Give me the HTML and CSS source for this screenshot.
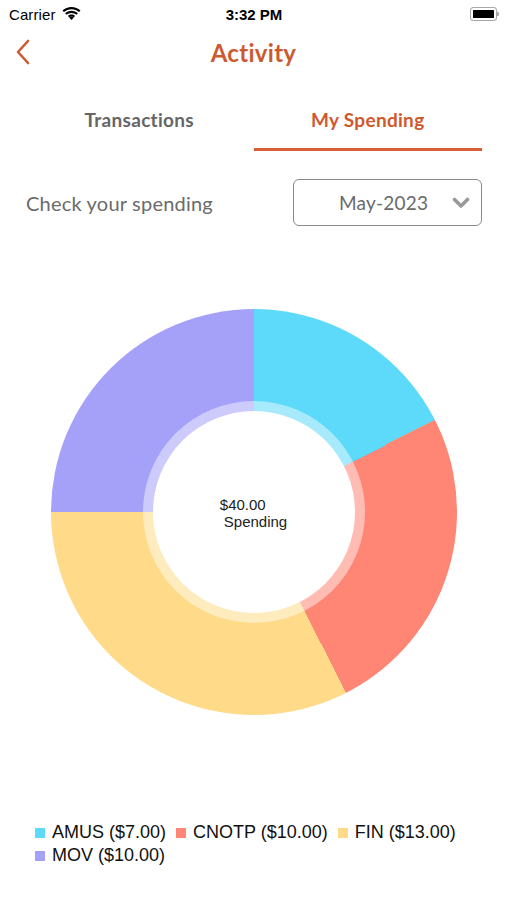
FILE: index.html
```html
<!DOCTYPE html>
<html>
<head>
<meta charset="utf-8">
<link rel="stylesheet" href="styles.css">
</head>
<body>
<div class="screen">
  <div class="status">
    <div class="status-left">
      <span class="carrier">Carrier</span>
      <svg class="wifi" width="19" height="13" viewBox="0 0 19 13">
        <path d="M9.5 2.2c2.9 0 5.5 1.1 7.5 2.9l1.5-1.6C16.1 1.3 12.9 0 9.5 0S2.9 1.3.5 3.5L2 5.1c2-1.8 4.6-2.9 7.5-2.9z" fill="#000"/>
        <path d="M9.5 5.9c1.9 0 3.6.7 4.9 1.9l1.5-1.6C14.2 4.6 12 3.7 9.5 3.7S4.8 4.6 3.1 6.2l1.5 1.6c1.3-1.2 3-1.9 4.9-1.9z" fill="#000"/>
        <path d="M9.5 9.5c.9 0 1.7.3 2.3.9L9.5 12.9 7.2 10.4c.6-.6 1.4-.9 2.3-.9z" fill="#000"/>
        <path d="M9.5 7.6c1.4 0 2.6.5 3.5 1.4l-1.2 1.3c-.6-.6-1.4-.9-2.3-.9s-1.7.3-2.3.9L6 9c.9-.9 2.1-1.4 3.5-1.4z" fill="#000"/>
      </svg>
    </div>
    <span class="time">3:32 PM</span>
    <div class="battery"><div class="battery-fill"></div><div class="battery-nub"></div></div>
  </div>

  <div class="nav">
    <svg class="back" width="16" height="26" viewBox="0 0 16 26">
      <path d="M13 2 L3 13 L13 24" fill="none" stroke="#CD5A2F" stroke-width="2.6" stroke-linecap="round" stroke-linejoin="round"/>
    </svg>
    <span class="title">Activity</span>
  </div>

  <div class="tabs">
    <div class="tab">Transactions</div>
    <div class="tab active">My Spending</div>
  </div>

  <div class="filter">
    <span class="filter-label">Check your spending</span>
    <div class="select">
      <span class="select-value">May-2023</span>
      <svg class="chev" width="18" height="12" viewBox="0 0 18 12">
        <path d="M2.5 2.5 L9 9 L15.5 2.5" fill="none" stroke="#9a9a9a" stroke-width="3.6" stroke-linecap="round" stroke-linejoin="round"/>
      </svg>
    </div>
  </div>

  <div class="chart-wrap">
    <div class="donut">
      <div class="donut-ring">
        <div class="donut-hole">
          <div class="center-text">
            <div>$40.00</div>
            <div class="indent">Spending</div>
          </div>
        </div>
      </div>
    </div>
  </div>

  <div class="legend">
    <div class="item"><span class="sw amus"></span>AMUS ($7.00)</div>
    <div class="item"><span class="sw cnotp"></span>CNOTP ($10.00)</div>
    <div class="item"><span class="sw fin"></span>FIN ($13.00)</div>
    <div class="item"><span class="sw mov"></span>MOV ($10.00)</div>
  </div>
</div>
</body>
</html>
```

FILE: styles.css
```css
html, body {
  margin: 0;
  padding: 0;
  background: #ffffff;
}
.screen {
  width: 507px;
  height: 900px;
  overflow: hidden;
  font-family: Lato, "Open Sans", sans-serif;
}
.status {
  height: 28px;
  display: flex;
  align-items: center;
  justify-content: space-between;
  padding: 0 8px 0 9px;
  font-family: "Liberation Sans", Arial, sans-serif;
  font-size: 15px;
  color: #000;
}
.status-left {
  display: flex;
  align-items: center;
  gap: 6px;
  width: 100px;
}
.carrier { letter-spacing: 0.1px; }
.wifi { display: block; margin-top: -2px; }
.time {
  font-weight: bold;
  font-size: 15px;
}
.battery {
  width: 100px;
  display: flex;
  justify-content: flex-end;
  align-items: center;
}
.battery-fill {
  width: 21px;
  height: 8px;
  background: #000;
  border-radius: 2.5px;
  border: 2px solid #fff;
  box-shadow: 0 0 0 1px #a8a8a8;
}
.battery-nub {
  width: 2px;
  height: 4px;
  background: #a8a8a8;
  border-radius: 0 1px 1px 0;
  margin-left: 1px;
}
.nav {
  height: 50px;
  display: flex;
  align-items: center;
  justify-content: center;
  position: relative;
}
.back {
  position: absolute;
  left: 15px;
  top: 11px;
}
.title {
  font-size: 24px;
  font-weight: bold;
  color: #CD5A2F;
  letter-spacing: 0.3px;
  margin-top: -2px;
}
.tabs {
  display: flex;
  margin: 16px 25px 0 25px;
}
.tab {
  flex: 1;
  height: 50px;
  padding-bottom: 4px;
  display: flex;
  align-items: center;
  justify-content: center;
  font-size: 19px;
  font-weight: bold;
  color: #666666;
  border-bottom: 3px solid transparent;
  letter-spacing: 0.3px;
}
.tab.active {
  color: #D0582C;
  border-bottom-color: #D65F34;
}
.filter {
  display: flex;
  align-items: center;
  justify-content: space-between;
  margin: 28px 25px 0 26px;
}
.filter-label {
  font-size: 20px;
  color: #6b6b6b;
  letter-spacing: 0.2px;
}
.select {
  box-sizing: border-box;
  width: 189px;
  height: 47px;
  border: 1px solid #8a8a8a;
  border-radius: 6px;
  display: flex;
  align-items: center;
  justify-content: space-between;
  padding: 0 11px 0 45px;
}
.select-value {
  font-size: 19px;
  color: #6a6a6a;
  letter-spacing: 0.2px;
}
.chev { display: block; }
.chart-wrap {
  display: flex;
  justify-content: center;
  margin-top: 83px;
}
.donut {
  width: 406px;
  height: 406px;
  border-radius: 50%;
  background: conic-gradient(#5DD9F9 0deg 63deg, #FF8575 63deg 153deg, #FEDA89 153deg 270deg, #A5A1F8 270deg 360deg);
  display: flex;
  align-items: center;
  justify-content: center;
}
.donut-ring {
  width: 222px;
  height: 222px;
  border-radius: 50%;
  background: rgba(255, 255, 255, 0.45);
  display: flex;
  align-items: center;
  justify-content: center;
}
.donut-hole {
  width: 202px;
  height: 202px;
  border-radius: 50%;
  background: #ffffff;
  display: flex;
  align-items: center;
  justify-content: center;
}
.center-text {
  font-family: "Liberation Sans", Arial, sans-serif;
  font-size: 15px;
  line-height: 17px;
  color: #222;
  margin-top: 1px;
}
.indent { padding-left: 4px; }
.legend {
  margin-top: 106px;
  padding: 0 30px 0 35px;
  display: flex;
  flex-wrap: wrap;
  column-gap: 10px;
  font-family: "Liberation Sans", Arial, sans-serif;
  font-size: 18px;
  line-height: 23px;
  color: #111;
}
.item {
  display: flex;
  align-items: center;
}
.sw {
  width: 10px;
  height: 10px;
  margin-right: 7px;
}
.sw.amus { background: #5DD9F9; }
.sw.cnotp { background: #FF8575; }
.sw.fin { background: #FEDA89; }
.sw.mov { background: #A5A1F8; }
```
